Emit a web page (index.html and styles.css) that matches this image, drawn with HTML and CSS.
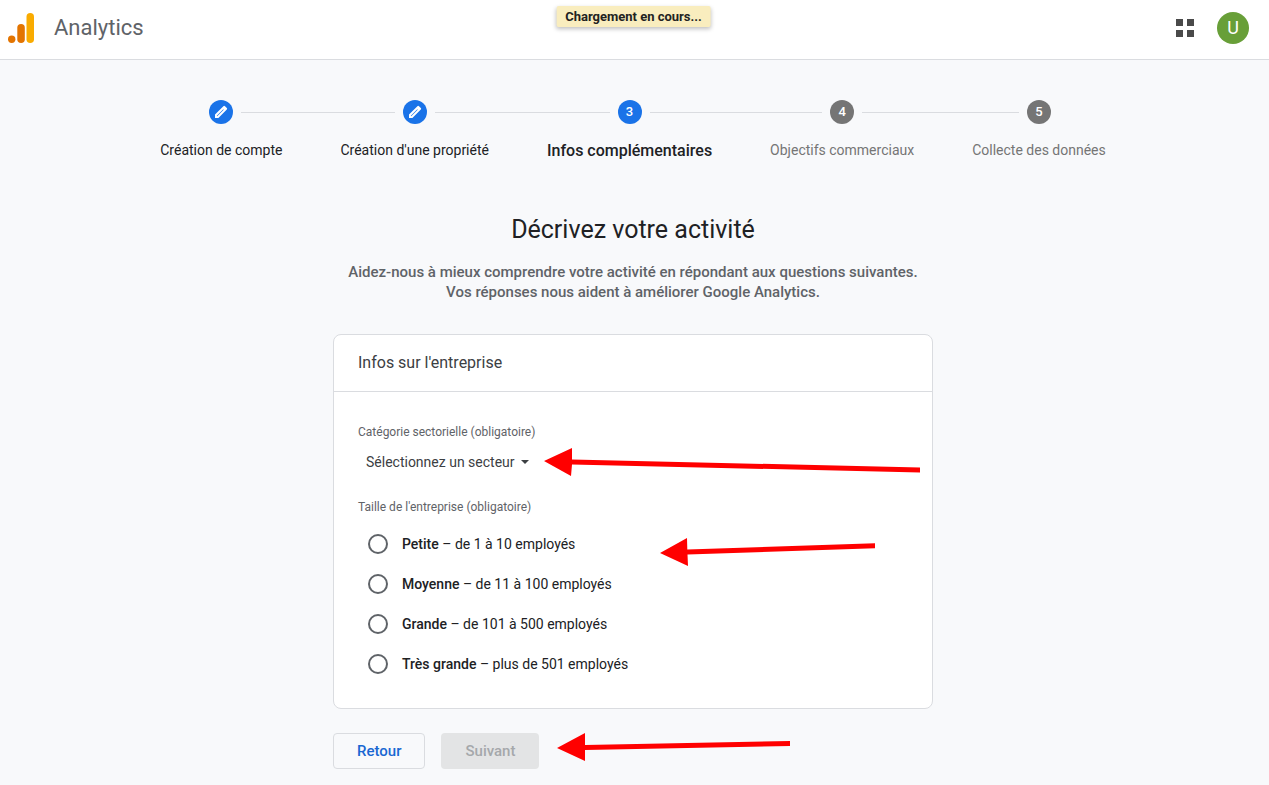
FILE: index.html
```html
<!DOCTYPE html>
<html lang="fr">
<head>
<meta charset="utf-8">
<meta name="viewport" content="width=device-width, initial-scale=1">
<title>Analytics</title>
<link rel="stylesheet" href="styles.css">
</head>
<body>
<header class="topbar">
  <div class="brand">
    <svg class="brand-logo" width="26" height="30" viewBox="0 0 26 30" aria-hidden="true">
      <rect x="18.500" y="0" width="7.500" height="30" rx="3.750" fill="#f9ab00"/>
      <rect x="9.300" y="11" width="7.500" height="19" rx="3.750" fill="#e37400"/>
      <circle cx="3.700" cy="26.300" r="3.700" fill="#e37400"/>
    </svg>
    <span class="brand-name">Analytics</span>
  </div>
  <div class="toast" role="status">Chargement en cours...</div>
  <div class="tools">
    <button class="icon-button" type="button" aria-label="Applications">
      <svg width="18" height="18" viewBox="0 0 18 18" aria-hidden="true"><path fill="#4a4a4a" d="M0 0h7v7H0zM11 0h7v7h-7zM0 11h7v7H0zM11 11h7v7h-7z"/></svg>
    </button>
    <button class="avatar" type="button" aria-label="Compte">U</button>
  </div>
</header>
<main class="page">
  <ol class="stepper">
    <li class="step done">
      <div class="track"><span class="dot"><svg width="16" height="16" viewBox="0 0 16 16" aria-hidden="true"><path fill="#fff" fill-rule="evenodd" d="M2 14v-3.400L10.400 2.200q.8-.8 1.600 0l1.800 1.800q.8.800 0 1.600L5.400 14zM4.200 12.200l6.500-6.500-.4-.4-6.500 6.500z"/></svg></span></div>
      <span class="step-label">Création de compte</span>
    </li>
    <li class="step done">
      <div class="track"><span class="dot"><svg width="16" height="16" viewBox="0 0 16 16" aria-hidden="true"><path fill="#fff" fill-rule="evenodd" d="M2 14v-3.400L10.400 2.200q.8-.8 1.600 0l1.800 1.800q.8.800 0 1.600L5.400 14zM4.200 12.200l6.500-6.500-.4-.4-6.500 6.500z"/></svg></span></div>
      <span class="step-label">Création d'une propriété</span>
    </li>
    <li class="step current" aria-current="step">
      <div class="track"><span class="dot">3</span></div>
      <span class="step-label">Infos complémentaires</span>
    </li>
    <li class="step">
      <div class="track"><span class="dot">4</span></div>
      <span class="step-label">Objectifs commerciaux</span>
    </li>
    <li class="step">
      <div class="track"><span class="dot">5</span></div>
      <span class="step-label">Collecte des données</span>
    </li>
  </ol>
  <h1 class="title">Décrivez votre activité</h1>
  <p class="intro">Aidez-nous à mieux comprendre votre activité en répondant aux questions suivantes.<br>Vos réponses nous aident à améliorer Google Analytics.</p>
  <form class="form">
    <section class="card">
      <h2 class="card-title">Infos sur l'entreprise</h2>
      <div class="card-body">
        <div class="field">
          <label class="field-label" for="sector">Catégorie sectorielle (obligatoire)</label>
          <div class="select-wrap">
            <select class="select" id="sector"><option>Sélectionnez un secteur</option></select>
            <svg class="caret" width="8" height="4" viewBox="0 0 8 4" aria-hidden="true"><path fill="#3c4043" d="M0 0h8L4 4z"/></svg>
          </div>
          <svg class="arrow arrow-sector" width="376" height="28" viewBox="0 0 376 28" aria-hidden="true"><path fill="#f00" d="M0 13L28 0v11.500L376 19.500v5L28 16.500 27 28z"/></svg>
        </div>
        <fieldset class="field sizes">
          <legend class="field-label">Taille de l'entreprise (obligatoire)</legend>
          <label class="choice"><input type="radio" name="size"><span><b>Petite</b> – de 1 à 10 employés</span></label>
          <label class="choice"><input type="radio" name="size"><span><b>Moyenne</b> – de 11 à 100 employés</span></label>
          <label class="choice"><input type="radio" name="size"><span><b>Grande</b> – de 101 à 500 employés</span></label>
          <label class="choice"><input type="radio" name="size"><span><b>Très grande</b> – plus de 501 employés</span></label>
          <svg class="arrow arrow-size" width="215" height="28" viewBox="0 0 215 28" aria-hidden="true"><path fill="#f00" d="M0 15L27 0l.3 11.500L215 5.300v5L27.500 16.500 28 28z"/></svg>
        </fieldset>
      </div>
    </section>
    <div class="actions">
      <button class="button button-outline" type="button">Retour</button>
      <button class="button button-filled" type="button" disabled>Suivant</button>
      <svg class="arrow arrow-next" width="233" height="28" viewBox="0 0 233 28" aria-hidden="true"><path fill="#f00" d="M0 15L28 0v12L233 8v5L28 17v11z"/></svg>
    </div>
  </form>
</main>
</body>
</html>
```
FILE: styles.css
```css
* { box-sizing: border-box; }

body {
  margin: 0;
  min-height: 100vh;
  background: #f8f9fb;
  color: #202124;
  font-family: Roboto, "Liberation Sans", sans-serif;
  font-size: 14px;
  line-height: 20px;
}

button, select { font: inherit; cursor: pointer; }

.topbar {
  position: relative;
  display: flex;
  align-items: center;
  justify-content: space-between;
  height: 60px;
  padding: 0 20px 4px 8px;
  border-bottom: 1px solid #dadce0;
  background: #fff;
}

.brand { display: flex; align-items: center; gap: 20px; }
.brand-logo { display: block; }
.brand-name { color: #5f6368; font-size: 22px; line-height: 30px; }

.toast {
  position: absolute;
  top: 6px;
  left: calc(50% - 1px);
  transform: translateX(-50%);
  padding: 0 9px;
  border-radius: 2px;
  background: #f9edbe;
  box-shadow: 0 2px 4px rgba(0, 0, 0, .25);
  color: #222;
  font-size: 13px;
  font-weight: 700;
  line-height: 21px;
  white-space: nowrap;
}

.tools { display: flex; align-items: center; gap: 23px; }
.icon-button { display: flex; padding: 0; border: 0; background: none; }

.avatar {
  width: 32px;
  height: 32px;
  padding: 0;
  border: 0;
  border-radius: 50%;
  background: #689f38;
  color: #fff;
  font-size: 18px;
  line-height: 32px;
}

.page { padding: 40px 3px 16px 0; }

.stepper {
  display: flex;
  justify-content: center;
  margin: 0;
  padding: 0;
  list-style: none;
}

.step { color: #757575; text-align: center; }
.step-label { display: block; padding: 0 29px; line-height: 20px; white-space: nowrap; }
.track { display: flex; align-items: center; gap: 8px; margin-bottom: 16px; }
.track::before, .track::after { content: ""; flex: 1; height: 1px; background: #dadce0; }
.step:first-child .track::before, .step:last-child .track::after { background: none; }

.dot {
  display: flex;
  align-items: center;
  justify-content: center;
  width: 24px;
  height: 24px;
  border-radius: 50%;
  background: #757575;
  color: #fff;
  font-size: 13px;
  font-weight: 500;
  line-height: 24px;
}

.done, .current { color: #202124; }
.done .dot, .current .dot { background: #1a73e8; }
.stepper { height: 60px; }
.current .step-label { font-size: 16px; font-weight: 500; line-height: 22px; }

.title {
  margin: 54px 0 0;
  font-size: 25px;
  font-weight: 400;
  line-height: 32px;
  text-align: center;
}

.intro {
  margin: 16px 0 32px;
  color: #5f6368;
  font-size: 15px;
  font-weight: 500;
  text-align: center;
}

.form { max-width: 600px; margin: 0 auto; }
.card { border: 1px solid #dadce0; border-radius: 8px; background: #fff; }

.card-title {
  margin: 0;
  padding: 16px 24px;
  border-bottom: 1px solid #dadce0;
  color: #3c4043;
  font-size: 16px;
  font-weight: 400;
  line-height: 24px;
}

.card-body { padding: 32px 24px 24px; }
.field { position: relative; margin: 0; padding: 0; border: 0; }
.field-label { display: block; padding: 0; color: #5f6368; font-size: 12px; line-height: 16px; }

.select-wrap { display: flex; align-items: center; width: max-content; margin-top: 4px; }

.select {
  appearance: none;
  height: 36px;
  margin-right: -14px;
  padding: 0 20px 0 8px;
  border: 0;
  background: none;
  color: #3c4043;
}

.caret { pointer-events: none; }
.sizes { margin-top: 19px; }
.sizes .field-label { margin-bottom: 9px; }

.choice {
  display: flex;
  align-items: center;
  gap: 14px;
  width: max-content;
  height: 40px;
  padding-left: 10px;
}

.choice b { font-weight: 500; }

.choice input {
  appearance: none;
  width: 20px;
  height: 20px;
  margin: 0;
  border: 2px solid #5f6368;
  border-radius: 50%;
}

.choice input:checked { background: radial-gradient(#1a73e8 5px, transparent 6px); border-color: #1a73e8; }

.actions { position: relative; display: flex; gap: 16px; margin-top: 24px; }

.button {
  height: 36px;
  padding: 0 23px;
  border: 1px solid transparent;
  border-radius: 4px;
  font-size: 15px;
  font-weight: 500;
}

.button-outline { border-color: #dadce0; background: none; color: #1967d2; }
.button-filled { background: #e3e4e5; color: #a5a8ab; cursor: default; }

.arrow { position: absolute; pointer-events: none; }
.arrow-sector { top: 24px; left: 186px; }
.arrow-size { top: 14px; left: 302px; }
.arrow-next { top: 0; left: 224px; }
```
